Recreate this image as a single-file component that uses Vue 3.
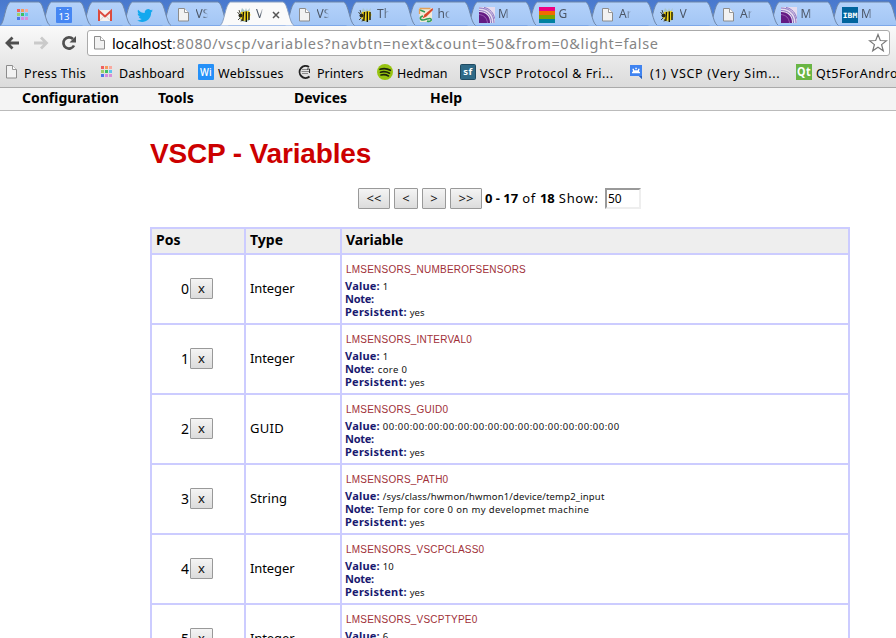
<script setup>
const tabData = [
  { icon: 'grid', w: 41, title: '' },
  { icon: 'cal', w: 41, title: '' },
  { icon: 'gmail', w: 40, title: '' },
  { icon: 'bird', w: 40, title: '' },
  { icon: 'page', w: 58, title: 'VS', wide: true },
  { icon: 'bee', w: 65, title: 'VS', active: true },
  { icon: 'page', w: 60.5, title: 'VS' },
  { icon: 'bee', w: 60.5, title: 'Th' },
  { icon: 'pencil', w: 60.5, title: 'ho' },
  { icon: 'swirl', w: 60.5, title: 'M' },
  { icon: 'stripes', w: 60.5, title: 'G' },
  { icon: 'page', w: 60.5, title: 'Ar' },
  { icon: 'bee', w: 60.5, title: 'V' },
  { icon: 'page', w: 60.5, title: 'Ar' },
  { icon: 'swirl', w: 60.5, title: 'M' },
  { icon: 'ibm', w: 60.5, title: 'M' }
]
const tabs = tabData.map((t, i) => {
  const W = t.w + 9
  return {
    ...t,
    W,
    z: t.active ? 40 : 30 - i,
    d: `M0 24.5C4.5 22.500 5 3 10.500 1H${W - 11}C${W - 6} 2 ${W - 5} 22 ${W} 24.5`
  }
})
const bookmarks = [
  { icon: 'page', text: 'Press This', cls: 'b1' },
  { icon: 'grid', text: 'Dashboard', cls: 'b2' },
  { icon: 'wi', text: 'WebIssues', cls: 'b3' },
  { icon: 'printer', text: 'Printers', cls: 'b4' },
  { icon: 'spotify', text: 'Hedman', cls: 'b5' },
  { icon: 'sf', text: 'VSCP Protocol & Fri...', cls: 'b6' },
  { icon: 'group', text: '(1) VSCP (Very Sim...', cls: 'b7' },
  { icon: 'qt', text: 'Qt5ForAndroid', cls: 'b8' }
]
const gridColors = ['#f0605f', '#f79a5c', '#f9a9a0', '#9ccf6a', '#3fc065', '#5cc3ee', '#4b78e8', '#d58be0', '#d88fd8']
const rows = [
  { type: 'Integer', name: 'LMSENSORS_NUMBEROFSENSORS', value: '1', note: '' },
  { type: 'Integer', name: 'LMSENSORS_INTERVAL0', value: '1', note: 'core 0' },
  { type: 'GUID', name: 'LMSENSORS_GUID0', value: '00:00:00:00:00:00:00:00:00:00:00:00:00:00:00:00', note: '' },
  { type: 'String', name: 'LMSENSORS_PATH0', value: '/sys/class/hwmon/hwmon1/device/temp2_input', note: 'Temp for core 0 on my developmet machine' },
  { type: 'Integer', name: 'LMSENSORS_VSCPCLASS0', value: '10', note: '' },
  { type: 'Integer', name: 'LMSENSORS_VSCPTYPE0', value: '6', note: '' }
]
</script>

<template>
  <svg class="defs" width="0" height="0">
    <defs>
      <linearGradient id="tabfill" x1="0" y1="0" x2="0" y2="1">
        <stop offset="0" stop-color="#b4d2fa" /><stop offset="1" stop-color="#a3c6f5" />
      </linearGradient>
      <symbol id="i-grid" viewBox="0 0 16 16">
        <rect v-for="(c, i) in gridColors" :key="i" :x="2 + (i % 3) * 4" :y="2 + Math.floor(i / 3) * 4" width="3" height="3" :fill="c" />
      </symbol>
      <symbol id="i-cal" viewBox="0 0 16 16">
        <rect width="16" height="16" rx="1" fill="#4586f3" />
        <path d="M3.500 2.500h1.500M11 2.500h1.500" stroke="#cfe0fc" />
        <text x="8" y="13" text-anchor="middle" font-size="9.5" font-family="Noto Sans" fill="#fff">13</text>
      </symbol>
      <symbol id="i-gmail" viewBox="0 0 16 16">
        <path d="M1 3h14v11H1z" fill="#f4f1ee" />
        <path d="M3 13.500L7 9M13 13.500L9 9" stroke="#d5d0cb" />
        <path d="M2 14V4L8 9.500 14 4V14" fill="none" stroke="#dc4b3e" stroke-width="2" />
      </symbol>
      <symbol id="i-bird" viewBox="0 0 16 16">
        <path d="M15.800 3.500c-.6.3-1.100.4-1.700.5.600-.4 1-.9 1.300-1.600-.6.300-1.300.6-2 .7a3.300 3.300 0 0 0-5.600 3C5 6 2.700 4.700 1.100 2.700.300 4.200.700 6 2.100 7c-.5 0-1-.1-1.400-.4 0 1.600 1.100 2.900 2.600 3.200-.5.100-1 .1-1.500 0 .4 1.300 1.600 2.200 3 2.300C3.500 13.200 1.800 13.700 0 13.500c6 3.600 14.200.2 14.200-8.300.6-.5 1.200-1 1.600-1.700z" fill="#13a8ee" />
      </symbol>
      <symbol id="i-page" viewBox="0 0 16 16">
        <path d="M2.500 1.500h6l4 4v8.500h-10z" fill="#f2f2f2" stroke="#8c8c8c" />
        <path d="M8.500 1.500v4h4" fill="#fff" stroke="#999" />
      </symbol>
      <symbol id="i-bee" viewBox="0 0 16 16">
        <path d="M5 1l3 3 1-3 1 3 3-3-1 4 1 1-1 8-4 1-4-1-2-4z" fill="#a9c5c9" />
        <path d="M4 5L12 4l1.500 4-2.500 5-5 1L3 11z" fill="#f2d51b" />
        <path d="M6.500 5L5.800 14M9.300 4.500v10.500M12 5v8" stroke="#17170b" stroke-width="1.400" />
        <circle cx="3.500" cy="8.500" r="2" fill="#292717" />
        <path d="M3 6L2 3M2 7L.500 5M3 11L1 13M5 12L4 14.500" stroke="#292717" stroke-width=".8" />
      </symbol>
      <symbol id="i-pencil" viewBox="0 0 16 16">
        <path d="M1 1h13v14H2z" fill="#f1ead9" />
        <path d="M2 3l5 2M5 9c-4 1-3 4 0 4s7-3 8-1-2 3-4 2" fill="none" stroke="#2f9d56" stroke-width="1.600" />
        <path d="M14.500 1L6.500 7.500l-2 4 4-2 6.500-6.500z" fill="#d9492a" />
        <path d="M1.500 1.500h11M1.500 2v5" stroke="#e3a058" stroke-width="1.300" />
      </symbol>
      <symbol id="i-swirl" viewBox="0 0 16 16">
        <rect width="16" height="16" fill="#e6dcee" />
        <path d="M0 5c7 0 11 4 11 11H0z" fill="#641b83" />
        <path d="M0 7.500c5 .5 8 3.500 8.500 8.500" fill="none" stroke="#9a5cb2" />
        <path d="M0 3.500c8 0 12.500 5 12.500 12.500M0 1c9 0 15 6 15 15M5 .5c6 1 10 6 10.500 11" fill="none" stroke="#8a72c1" />
      </symbol>
      <symbol id="i-stripes" viewBox="0 0 16 16">
        <path fill="#ed0080" d="M0 0h16v4H0z" /><path fill="#ef6b00" d="M0 4h16v4H0z" />
        <path fill="#79a400" d="M0 8h16v4H0z" /><path fill="#0081a0" d="M0 12h16v4H0z" />
      </symbol>
      <symbol id="i-ibm" viewBox="0 0 16 16">
        <rect width="16" height="16" fill="#00649d" />
        <text x="8" y="10.800" text-anchor="middle" font-size="7.200" font-weight="700" font-family="DejaVu Sans Mono" textLength="14.500" lengthAdjust="spacingAndGlyphs" fill="#fff">IBM</text>
      </symbol>
      <symbol id="i-wi" viewBox="0 0 16 16">
        <rect width="16" height="16" rx="1" fill="#2490f8" />
        <text x="8" y="12" text-anchor="middle" font-size="11" font-weight="600" font-family="Open Sans" textLength="12" lengthAdjust="spacingAndGlyphs" fill="#fff">Wi</text>
      </symbol>
      <symbol id="i-printer" viewBox="0 0 16 16">
        <path d="M12 3A6 6 0 1 0 12.500 12.500" fill="none" stroke="#222" stroke-width="1.900" />
        <path d="M5 5.500h6M4.500 7.500h8M5 9.500h6" stroke="#8a8a8a" />
        <path d="M10 5h2.500v4" fill="none" stroke="#333" />
      </symbol>
      <symbol id="i-spotify" viewBox="0 0 16 16">
        <circle cx="8" cy="8" r="8" fill="#97c410" />
        <path d="M3 5.300c3.500-1 7.300-.700 10.300 1M3.500 8.200c3.200-.9 6.200-.5 9 1M4 11c2.700-.7 5.200-.4 7.500.9" fill="none" stroke="#1d260a" stroke-width="1.700" stroke-linecap="round" />
      </symbol>
      <symbol id="i-sf" viewBox="0 0 16 16">
        <rect x=".5" y=".5" width="15" height="15" rx="1" fill="#2f6a87" stroke="#1f4a61" />
        <text x="8" y="10.500" text-anchor="middle" font-size="9.500" font-weight="700" font-family="Noto Sans" fill="#fff">sf</text>
      </symbol>
      <symbol id="i-group" viewBox="0 0 16 16">
        <path d="M2 1h12v14l-3-3H2z" fill="#3f83f0" />
        <path d="M11 12h3v3z" fill="#285fba" />
        <path d="M4 8.500h8M4.500 5.500H6M10 5.500h1.500M7.300 4.500h1.500M5 7h6" stroke="#fff" stroke-width="1.300" />
      </symbol>
      <symbol id="i-qt" viewBox="0 0 16 16">
        <rect width="16" height="16" fill="#69b544" />
        <text x="8" y="12.300" text-anchor="middle" font-size="13" font-weight="700" font-family="Open Sans" textLength="14" lengthAdjust="spacingAndGlyphs" fill="#fff">Qt</text>
      </symbol>
    </defs>
  </svg>

  <div class="window">
    <div class="tabstrip">
      <div v-for="(t, i) in tabs" :key="i" class="tab" :class="{ active: t.active, pinned: !t.title, wide: t.wide }" :style="{ width: t.W + 'px', zIndex: t.z }">
        <svg class="shape" :width="t.W" height="25">
          <path :d="t.d" :fill="t.active ? '#fafafa' : 'url(#tabfill)'" :stroke="t.active ? '#8aa0c0' : '#6f87a9'" />
        </svg>
        <svg class="fav" width="16" height="16"><use :href="'#i-' + t.icon" /></svg>
        <span class="tabtitle">{{ t.title }}</span>
        <svg v-if="t.active" class="close" width="8" height="8"><path d="M1 1l6 6M7 1L1 7" stroke="#555" stroke-width="1.500" /></svg>
      </div>
    </div>

    <div class="chrome">
      <div class="toolbar">
        <svg class="nav" width="82" height="24" fill="none">
          <path d="M19 12H7M12.500 6.500L7 12l5.500 5.500" stroke="#4e4e4e" stroke-width="2.800" />
          <path d="M34 12h12M41 6.500l5.500 5.500-5.500 5.500" stroke="#cacaca" stroke-width="2.800" />
          <path d="M73 8A5.600 5.600 0 1 0 74 14.500" stroke="#505050" stroke-width="2.700" />
          <path d="M76 5v6.500h-6.500z" fill="#505050" />
        </svg>
        <div class="omnibox">
          <svg width="16" height="16" class="pageicon"><use href="#i-page" /></svg>
          <span class="url"><b>localhost</b>:8080/vscp/variables?navbtn=next&amp;count=50&amp;from=0&amp;light=false</span>
          <svg class="star" width="20" height="20"><path d="M10 1.500l2.300 6 6.200.2-4.900 3.900 1.700 6.200L10 14.300l-5.300 3.500 1.700-6.200L1.500 7.700l6.200-.2z" fill="#fff" stroke="#777" stroke-width="1.200" /></svg>
        </div>
      </div>
      <div class="bookmarks">
        <div v-for="b in bookmarks" :key="b.text" class="bm" :class="b.cls">
          <svg width="16" height="16"><use :href="'#i-' + b.icon" /></svg><span>{{ b.text }}</span>
        </div>
      </div>
    </div>

    <nav class="menu">
      <span>Configuration</span><span>Tools</span><span>Devices</span><span>Help</span>
    </nav>

    <main>
      <h1>VSCP - Variables</h1>
      <div class="pager">
        <button class="wide">&lt;&lt;</button><button>&lt;</button><button>&gt;</button><button class="wide">&gt;&gt;</button>
        <span class="range"><b>0 - 17</b> of <b>18</b> Show:</span>
        <input value="50" />
      </div>
      <div class="table">
        <div class="row head"><div>Pos</div><div>Type</div><div>Variable</div></div>
        <div v-for="(r, i) in rows" :key="r.name" class="row">
          <div class="pos"><span>{{ i }}</span><button>x</button></div>
          <div class="type" :class="r.type.toLowerCase()">{{ r.type }}</div>
          <div class="var">
            <div class="name">{{ r.name }}</div>
            <div class="line"><b class="lv">Value:</b><span :class="'v-' + r.type.toLowerCase()">{{ r.value }}</span></div>
            <div class="line"><b class="ln">Note:</b><span class="note">{{ r.note }}</span></div>
            <div class="line"><b class="lp">Persistent:</b><span>yes</span></div>
          </div>
        </div>
      </div>
    </main>
  </div>
</template>

<style>
body { background: #fff; overflow: hidden; }
</style>
<style scoped>
* { box-sizing: border-box; }
.defs { display: block; }
.window { width: 896px; height: 638px; overflow: hidden; font-family: "Noto Sans", sans-serif; color: #000; }
.tabstrip { display: flex; height: 26px; padding-top: 1px; background: linear-gradient(#4878cd, #5588dc); overflow: hidden; }
.tab { position: relative; flex: none; display: flex; align-items: center; height: 25px; margin-right: -9px; padding-left: 12px; }
.tab.pinned { padding-left: 15px; }
.tab.wide { padding-left: 14px; }
.tab.active { padding-left: 17px; }
.shape { position: absolute; left: 0; top: 0; }
.fav { position: relative; flex: none; margin-top: 2px; }
.tabtitle { position: relative; width: 12px; margin-left: 3.500px; overflow: hidden; font-size: 12px; line-height: 22px; color: #4b5666; -webkit-mask-image: linear-gradient(90deg, #000 60%, transparent); }
.tab.active .tabtitle { width: 7px; margin-left: 3px; }
.close { position: relative; margin: 3px 0 0 9px; }
.chrome { height: 62px; background: linear-gradient(#fafafa, #dbdbdb); border-bottom: 1px solid #aaa; }
.toolbar { display: flex; height: 34px; padding-top: 5px; }
.nav { flex: none; width: 87px; height: 24px; }
.omnibox { display: flex; align-items: center; width: 803px; height: 26px; margin-top: -1px; padding: 0 1px 0 4px; background: #fff; border: 1px solid #aaa; border-radius: 3px; }
.url { flex: 1; margin-left: 4px; font-size: 14.500px; letter-spacing: .66px; color: #858585; white-space: nowrap; }
.url b { font-weight: 400; letter-spacing: -.15px; color: #000; }
.bookmarks { position: relative; display: flex; height: 26px; align-items: center; font-size: 12.500px; white-space: nowrap; }
.bm { display: flex; flex: none; align-items: center; gap: 4px; height: 24px; }
.bm svg { flex: none; margin-bottom: 2px; }
.b1 { width: 94px; padding-left: 4px; letter-spacing: .35px; }
.b2 { width: 104px; padding-left: 5px; letter-spacing: .1px; }
.b3 { width: 99px; letter-spacing: .3px; }
.b4 { width: 80px; }
.b5 { width: 83px; }
.b6 { width: 168px; letter-spacing: .5px; }
.b7 { width: 168px; gap: 6px; letter-spacing: .7px; }
.b8 { letter-spacing: .5px; }
.menu { display: flex; height: 23px; padding-left: 22px; background: #f4f4f4; border-bottom: 1px solid #bbb; font: 700 14px/20px "Noto Sans", sans-serif; }
.menu span { width: 136px; }
main { padding-left: 150px; }
h1 { height: 28px; margin: 29px 0 0; font: 700 28px/28px "Liberation Sans", sans-serif; letter-spacing: -.15px; color: #c00; white-space: nowrap; }
.pager { display: flex; align-items: center; gap: 4px; height: 21px; margin: 20px 0 18px; padding-left: 208px; font-size: 13px; white-space: nowrap; }
button { width: 24px; height: 21px; padding: 0 0 1px; background: linear-gradient(#f4f4f4, #dcdcdc); border: 1px solid #999; border-radius: 1px; color: #111; font: 13px/18px "Noto Sans", sans-serif; }
button.wide { width: 32px; }
.range { width: 116px; margin: -2px 0 0 -1px; font: 13px/20px "Noto Sans", sans-serif; letter-spacing: .65px; }
.range b { letter-spacing: 0; }
input { width: 36px; height: 21px; padding: 0 0 0 1px; border: 2px solid; border-color: #999 #eee #eee #999; font: 12px "Noto Sans", sans-serif; background: #fff; }
.table { display: grid; width: 700px; padding: 2px; gap: 2px; background: #ccf; }
.row { display: grid; grid-template-columns: 92px 94px 506px; gap: 2px; height: 68px; }
.row > div { background: #fff; }
.head { height: 24px; }
.head > div { padding-left: 4px; background: #eee; font: 700 14px/22px "Noto Sans", sans-serif; }
.pos { display: flex; align-items: center; padding: 0 0 2px 29px; font: 14px "Noto Sans", sans-serif; }
.pos button { width: 23px; margin-left: 1px; }
.type { padding-left: 4px; font: 13px/67px "Noto Sans", sans-serif; }
.type.integer { letter-spacing: -.1px; }
.type.guid { letter-spacing: .3px; }
.type.string { letter-spacing: .1px; }
.var { padding: 8px 0 0 3px; white-space: nowrap; }
.name { height: 16px; padding-left: 1px; font: 10px/13px "Liberation Sans", sans-serif; letter-spacing: .22px; color: #a03038; }
.line { display: flex; height: 13px; font: 9.500px/13px "Noto Sans", sans-serif; color: #111; }
.line b { font-size: 11px; color: #191970; }
.lv { letter-spacing: .2px; }
.ln { letter-spacing: -.3px; }
.lp { letter-spacing: .25px; }
.line span { margin-left: 3px; padding-top: 1px; }
.line .v-guid { letter-spacing: .53px; }
.line .v-string { letter-spacing: .17px; }
.line .note { margin-left: 4px; letter-spacing: .38px; }
</style>
